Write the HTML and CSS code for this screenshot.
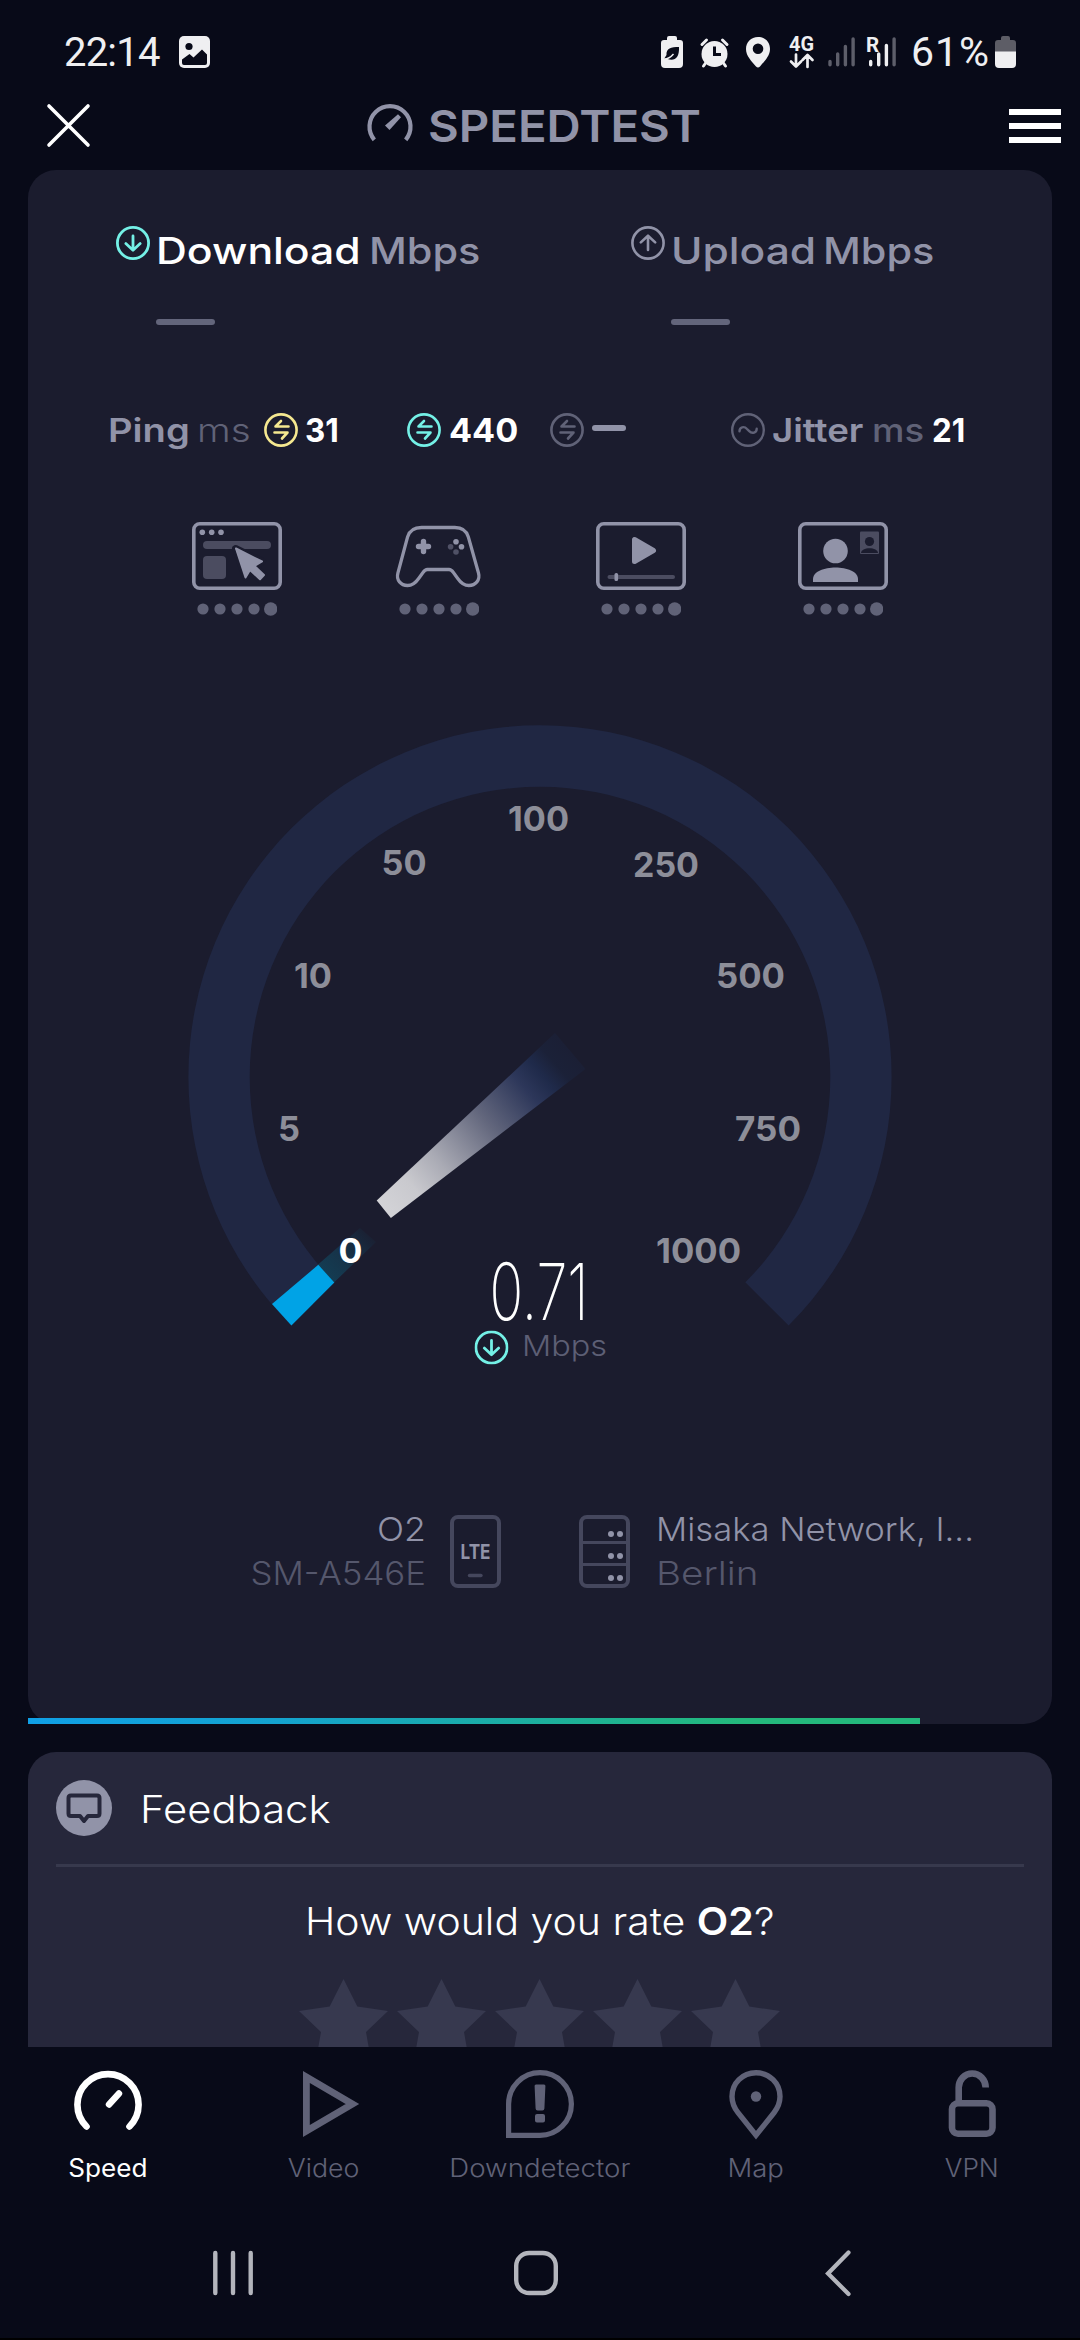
FILE: index.html
```html
<!DOCTYPE html>
<html lang="en">
<head>
<meta charset="utf-8">
<title>Speedtest</title>
<link rel="stylesheet" href="styles.css">
</head>
<body>
<svg class="defs" aria-hidden="true">
  <defs>
    <symbol id="i-down" viewBox="0 0 34 34"><g fill="none" stroke="currentColor" stroke-width="2.8" stroke-linecap="round" stroke-linejoin="round"><circle cx="17" cy="17" r="15.6"/><path d="M17 10v14M9.800 17.600 17 24.300l7.200-6.700"/></g></symbol>
    <symbol id="i-up" viewBox="0 0 34 34"><g fill="none" stroke="currentColor" stroke-width="2.600" stroke-linecap="round" stroke-linejoin="round"><circle cx="17" cy="17" r="15.600"/><path d="M17 24V10M9.800 16.400 17 9.700l7.200 6.700"/></g></symbol>
    <symbol id="i-swap" viewBox="0 0 34 34"><g fill="none" stroke="currentColor" stroke-width="2.600" stroke-linecap="round" stroke-linejoin="round"><circle cx="17" cy="17" r="15.600"/><path d="M24.500 13.500H11.500L17 8M10.500 19.500H23.500L18 25.500"/></g></symbol>
    <symbol id="i-wave" viewBox="0 0 34 34"><g fill="none" stroke="currentColor" stroke-width="2.400" stroke-linecap="round"><circle cx="17" cy="17" r="15.800"/><path d="M8.500 18.200c0-4 4.500-5.500 7.500-2.200l2.200 2.200c3 3 7.500 1.500 7.500-2.500"/></g></symbol>
    <symbol id="i-dots" viewBox="0 0 80 16"><g fill="#606277"><circle cx="6" cy="8" r="5.600"/><circle cx="23" cy="8" r="5.600"/><circle cx="40" cy="8" r="5.600"/><circle cx="57" cy="8" r="5.600"/><circle cx="73.700" cy="8" r="6.700"/></g></symbol>
    <symbol id="i-star" viewBox="0 0 90 90"><path fill="#37394f" d="M44.500 0 58.300 27.500 89 32 67 53l6 34-28.500-14L16 87l6-34L0 32l30.700-4.500z"/></symbol>
  </defs>
</svg>

<header class="status">
  <span class="clock">22:14</span>
  <svg class="photo" width="31" height="32" viewBox="0 0 31 32"><rect width="31" height="32" rx="5" fill="#efeff1"/><circle cx="10" cy="10.500" r="3.600" fill="#080a18"/><path d="M3 23.500 10.500 18l4 3.500L23 13.500l5 5V27q0 2-2 2H5q-2 0-2-2z" fill="#080a18"/></svg>
  <div class="indicators">
    <svg width="22" height="32" viewBox="0 0 22 32"><path fill="#efeff1" d="M6 4V2q0-2 2-2h6q2 0 2 2v2h3q3 0 3 3v21q0 4-4 4H4q-4 0-4-4V7q0-3 3-3z"/><path fill="#080a18" d="M18 11c-8 0-13 1.500-12.500 8L3 23h3.500c7 2.500 12-1 11.500-12z"/><path d="M3 23c4 0 7-2 9.500-5" stroke="#efeff1" stroke-width="1.400" fill="none"/></svg>
    <svg class="g17" width="29" height="31" viewBox="0 0 29 31"><g fill="none" stroke="#efeff1" stroke-width="3" stroke-linecap="round"><path d="M2 7.500 6.500 3M27 7.500 22.500 3M6 25.500 3.500 29M23 25.500 25.500 29"/></g><circle cx="14.500" cy="17" r="13" fill="#efeff1"/><path d="M14.500 9.500V17.500H21" fill="none" stroke="#080a18" stroke-width="3"/></svg>
    <svg class="g17" width="24" height="31" viewBox="0 0 24 31"><path fill="#efeff1" fill-rule="evenodd" d="M12 0C5 0 0 5 0 12c0 7 5.500 12 10 17.500q2 2 4 0C18.500 24 24 19 24 12 24 5 19 0 12 0zm0 6.500a5.300 5.300 0 1 1 0 10.600 5.300 5.300 0 0 1 0-10.600z"/></svg>
    <svg class="g19" width="26" height="34" viewBox="0 0 26 34"><text x="0" y="15.500" class="net" textLength="25" lengthAdjust="spacingAndGlyphs">4G</text><path d="M7 19.500V31M2 26.500l5 5 5-5M18.500 32V20.500M13.500 25l5-5 5 5" fill="none" stroke="#efeff1" stroke-width="2.700" stroke-linecap="round" stroke-linejoin="round"/></svg>
    <svg class="g13" width="27" height="30" viewBox="0 0 27 30"><g stroke="#5d5e6a" stroke-width="3.400" stroke-linecap="round"><path d="M2 24.500v3.300M9.700 17v10.800M17.400 9.500v18.300M25.100 2v25.800"/></g></svg>
    <svg class="g11" width="30" height="32" viewBox="0 0 30 32"><text x="0" y="15.500" class="net">R</text><g stroke="#efeff1" stroke-width="3.400" stroke-linecap="round"><path d="M4.700 25.500v3.300M12.700 18v10.800M20.400 9.500v19.300"/><path d="M28.100 3v25.800" stroke="#5d5e6a"/></g></svg>
    <span class="percent">61%</span>
    <svg width="21" height="32" viewBox="0 0 21 32"><path fill="#5d5d66" d="M6 4V2q0-2 2-2h5q2 0 2 2v2h3q3 0 3 3v9H0V7q0-3 3-3z"/><path fill="#efeff1" d="M0 15.500h21V28q0 4-4 4H4q-4 0-4-4z"/></svg>
  </div>
</header>

<nav class="topbar">
  <svg class="close" width="43" height="43" viewBox="0 0 43 43"><path d="M2 2 41 41M41 2 2 41" stroke="#fff" stroke-width="3.600" stroke-linecap="round"/></svg>
  <div class="brand">
    <svg width="46" height="42" viewBox="0 0 46 42"><path d="M7.300 37.800A20.500 20.500 0 1 1 38.700 37.800" fill="none" stroke="#9193a8" stroke-width="4.200"/><path fill="#9193a8" d="m18 23.500 13-11.200 3 3L22.500 28z"/></svg>
    <h1 class="t">SPEEDTEST</h1>
  </div>
  <div class="menu"><i></i><i></i><i></i></div>
</nav>

<main class="card test">
  <section class="speeds">
    <div>
      <div class="speed on"><svg width="34" height="34"><use href="#i-down"/></svg><b class="t dl">Download</b><span class="t">Mbps</span></div>
      <div class="dash"></div>
    </div>
    <div>
      <div class="speed"><svg width="34" height="34"><use href="#i-up"/></svg><b class="t ul">Upload</b><span class="t">Mbps</span></div>
      <div class="dash"></div>
    </div>
  </section>

  <section class="latency">
    <div class="ping-label"><b class="t ping">Ping</b><span class="t ms light">ms</span></div>
    <div class="lat idle"><svg width="34" height="34"><use href="#i-swap"/></svg><b class="t n2">31</b></div>
    <div class="lat down"><svg width="34" height="34"><use href="#i-swap"/></svg><b class="t n3">440</b></div>
    <div class="lat dim"><svg width="34" height="34"><use href="#i-swap"/></svg><i class="nodata"></i></div>
    <div class="lat dim"><svg width="34" height="34"><use href="#i-wave"/></svg><span class="t jitter">Jitter</span><span class="t ms">ms</span><b class="t n2">21</b></div>
  </section>

  <section class="quality">
    <div>
      <svg width="90" height="68" viewBox="0 0 90 68"><rect x="1.800" y="1.800" width="86.400" height="64.400" rx="6" fill="none" stroke="#9193a8" stroke-width="3.600"/><g fill="#9193a8"><circle cx="10.300" cy="10.300" r="2.800"/><circle cx="19.700" cy="10.300" r="2.800"/><circle cx="29" cy="10.300" r="2.800"/></g><g fill="#4b4c60"><rect x="11" y="19" width="68" height="8" rx="4"/><rect x="11" y="34" width="23" height="23" rx="4"/></g><path d="M43.500 26.500 70.500 39.500 62.500 44l9.500 9-4.500 4.500-9.500-9.500-4.500 7.500z" fill="#9193a8" stroke="#1b1c2e" stroke-width="7" paint-order="stroke" stroke-linejoin="round"/><path d="M44 26.500 70 39.500 62.500 44l9.500 9-4 4.200-10-9.200-4.500 7.500z" fill="#9193a8" stroke="#9193a8" stroke-width="2" stroke-linejoin="round"/></svg>
      <svg width="80" height="16"><use href="#i-dots"/></svg>
    </div>
    <div>
      <svg width="90" height="68" viewBox="0 0 90 68"><path d="M27 5.500H61.500C69 5.500 73.500 8.500 75.500 15L86 51C88 58 83 63.500 76 63.500 70 63.500 67 60 64.500 56.500L60 50.500C58.500 48.500 57.500 47.500 55.500 47.500H33C31 47.500 30 48.500 28.500 50.500L24 56.500C21.500 60 18.500 63.500 12.500 63.500 5.500 63.500 .500 58 2.500 51L12.500 15C14.500 8.500 19.500 5.500 27 5.500z" fill="none" stroke="#9193a8" stroke-width="3.400" transform="translate(1.500 0) scale(.965 1)"/><path d="M29.500 19.500v10M24.500 24.500h10" stroke="#9193a8" stroke-width="5.400" stroke-linecap="round"/><g fill="#9193a8"><circle cx="62" cy="19.700" r="2.800"/><circle cx="67.500" cy="24.700" r="2.800"/><g fill="#505166"><circle cx="56.600" cy="24.700" r="2.800"/><circle cx="62" cy="30" r="2.800"/></g></g></svg>
      <svg width="80" height="16"><use href="#i-dots"/></svg>
    </div>
    <div>
      <svg width="90" height="68" viewBox="0 0 90 68"><rect x="1.800" y="1.800" width="86.400" height="64.400" rx="6" fill="none" stroke="#9193a8" stroke-width="3.600"/><path d="M38.500 17.500v22L57.500 28.500z" fill="#9193a8" stroke="#9193a8" stroke-width="5" stroke-linejoin="round"/><path d="M13.500 55H77" stroke="#4b4c60" stroke-width="4" stroke-linecap="round"/><rect x="18.500" y="51" width="3.600" height="8" rx="1.600" fill="#9193a8"/></svg>
      <svg width="80" height="16"><use href="#i-dots"/></svg>
    </div>
    <div>
      <svg width="90" height="68" viewBox="0 0 90 68"><rect x="1.800" y="1.800" width="86.400" height="64.400" rx="6" fill="none" stroke="#9193a8" stroke-width="3.600"/><circle cx="37.500" cy="29" r="12.300" fill="#9193a8"/><path d="M15 60v-3C15 41.500 60 41.500 60 57v3z" fill="#9193a8"/><rect x="62" y="9.500" width="19" height="22.500" rx="1" fill="#4b4c60"/><circle cx="71.500" cy="19.500" r="4.600" fill="#1b1c2e"/><path d="M63 31c0-6.500 17-6.500 17 0z" fill="#1b1c2e"/></svg>
      <svg width="80" height="16"><use href="#i-dots"/></svg>
    </div>
  </section>

  <svg class="gauge" width="1024" height="680" viewBox="28 700 1024 680">
    <defs>
      <linearGradient id="needle" gradientUnits="userSpaceOnUse" x1="384" y1="1209" x2="570" y2="1051"><stop offset="0" stop-color="#d3d3d7"/><stop offset=".15" stop-color="#c9c9ce"/><stop offset=".3" stop-color="#a9aab4"/><stop offset=".55" stop-color="#63677d"/><stop offset=".76" stop-color="#2d375a"/><stop offset=".85" stop-color="#1f2a4a"/><stop offset=".92" stop-color="#1b2138"/><stop offset="1" stop-color="#1b1f35"/></linearGradient>
      <linearGradient id="glow" gradientUnits="userSpaceOnUse" x1="326" y1="1274" x2="374" y2="1230"><stop offset="0" stop-color="#143c52"/><stop offset=".5" stop-color="#173046"/><stop offset="1" stop-color="#1b1c2e"/></linearGradient>
    </defs>
    <path fill="#202743" d="M291.400 1325.600A351.600 351.600 0 1 1 788.600 1325.600L745.300 1282.300A290.300 290.300 0 1 0 334.700 1282.300z"/>
    <path fill="url(#glow)" d="M317.500 1265 360 1228 376 1242 334 1282.500z"/>
    <path fill="#00a3e6" d="M291.400 1325.600 272 1304 318.300 1264.800 334.300 1282.500z"/>
    <path fill="url(#needle)" d="M376.700 1200.400 390.900 1217.900 585.500 1069 555 1033z"/>
    <g class="ticks">
      <text x="508" y="831" textLength="61" lengthAdjust="spacingAndGlyphs">100</text>
      <text x="381.500" y="874.500" textLength="45" lengthAdjust="spacingAndGlyphs">50</text>
      <text x="633" y="876.500" textLength="66" lengthAdjust="spacingAndGlyphs">250</text>
      <text x="294" y="987.500" textLength="38" lengthAdjust="spacingAndGlyphs">10</text>
      <text x="716" y="987.500" textLength="69" lengthAdjust="spacingAndGlyphs">500</text>
      <text x="278" y="1140.500" textLength="22" lengthAdjust="spacingAndGlyphs">5</text>
      <text x="735" y="1140.500" textLength="66" lengthAdjust="spacingAndGlyphs">750</text>
      <text x="656" y="1262.500" textLength="85" lengthAdjust="spacingAndGlyphs">1000</text>
      <text class="lit" x="338.500" y="1262.500" textLength="24" lengthAdjust="spacingAndGlyphs">0</text>
    </g>
    <text class="value" x="489.500" y="1319.500" textLength="99" lengthAdjust="spacingAndGlyphs">0.71</text>
    <use href="#i-down" x="474.500" y="1330.500" width="34" height="34" color="#74f0e6"/>
    <text class="unit" x="522" y="1355.500" textLength="85" lengthAdjust="spacingAndGlyphs">Mbps</text>
  </svg>

  <section class="link">
    <div class="who right"><p class="t">O2</p><p class="t sub">SM-A546E</p></div>
    <svg width="51" height="73" viewBox="0 0 51 73"><rect x="2" y="2" width="47" height="69" rx="6" fill="none" stroke="#45475d" stroke-width="4"/><text class="lte" x="10.500" y="44" textLength="30" lengthAdjust="spacingAndGlyphs">LTE</text><path d="M19.500 60.500h11.500" stroke="#45475d" stroke-width="3.400" stroke-linecap="round"/></svg>
    <svg class="server" width="51" height="73" viewBox="0 0 51 73"><rect x="2" y="2" width="47" height="69" rx="6" fill="none" stroke="#45475d" stroke-width="4"/><path d="M2 27.500h47M2 49.500h47" stroke="#45475d" stroke-width="3"/><g fill="#9193a8"><circle cx="32" cy="19" r="3"/><circle cx="41" cy="19" r="3"/><circle cx="32" cy="41" r="3"/><circle cx="41" cy="41" r="3"/><circle cx="32" cy="63" r="3"/><circle cx="41" cy="63" r="3"/></g></svg>
    <div class="who"><p class="t host">Misaka Network, I...</p><p class="t sub city">Berlin</p></div>
  </section>

  <div class="progress"></div>
</main>

<section class="card feedback">
  <div class="fb-head">
    <svg width="56" height="56" viewBox="0 0 56 56"><circle cx="28" cy="28" r="28" fill="#9193a8"/><path d="M15 15.500h26q2.500 0 2.500 2.500v15.500q0 2.500-2.500 2.500H32l-4 5-4-5H15q-2.500 0-2.500-2.500V18q0-2.500 2.500-2.500z" fill="none" stroke="#26273b" stroke-width="4" stroke-linejoin="round"/></svg>
    <h2 class="t">Feedback</h2>
  </div>
  <p class="question"><span class="t">How would you rate <b>O2</b>?</span></p>
  <div class="stars"><svg width="90" height="90"><use href="#i-star"/></svg><svg width="90" height="90"><use href="#i-star"/></svg><svg width="90" height="90"><use href="#i-star"/></svg><svg width="90" height="90"><use href="#i-star"/></svg><svg width="90" height="90"><use href="#i-star"/></svg></div>
</section>

<nav class="tabs">
  <a class="on"><svg width="68" height="68" viewBox="0 0 68 68"><g fill="none" stroke="currentColor" stroke-linecap="round"><path d="M12.500 56.500A30.600 30.600 0 1 1 55.500 56.500" stroke-width="6.600"/><path d="m35 34.500 10-11" stroke-width="6.400"/></g></svg><span class="t speed-l">Speed</span></a>
  <a><svg width="68" height="68" viewBox="0 0 68 68"><path d="M16.400 7v54L62.500 34z" fill="none" stroke="currentColor" stroke-width="6.800"/></svg><span class="t video-l">Video</span></a>
  <a><svg width="68" height="68" viewBox="0 0 68 68"><path d="M2.600 65.400V34A31.400 31.400 0 1 1 34 65.400z" fill="none" stroke="currentColor" stroke-width="5.200"/><path fill="currentColor" d="M30 14.500h8q1.500 0 1.400 1.500l-1 22.500q-.100 2-2 2h-4.800q-1.900 0-2-2l-1-22.500q-.100-1.500 1.400-1.500zM31 44h6q2 0 2 2v4.500q0 2-2 2h-6q-2 0-2-2V46q0-2 2-2z"/></svg><span class="t down-l">Downdetector</span></a>
  <a><svg width="68" height="68" viewBox="0 0 68 68"><path d="M34 2.800C20.500 2.800 10 13.300 10 26.500c0 7 2.500 11.700 6 16.200L34 65.200 52 42.700c3.500-4.500 6-9.200 6-16.200C58 13.300 47.500 2.800 34 2.800z" fill="none" stroke="currentColor" stroke-width="5.400"/><circle cx="34" cy="26.500" r="5.200" fill="currentColor"/></svg><span class="t map-l">Map</span></a>
  <a><svg width="68" height="68" viewBox="0 0 68 68"><g fill="none" stroke="currentColor" stroke-width="6.600"><rect x="14" y="33.300" width="40.500" height="30.400" rx="6"/><path d="M20.700 31V17.500a13.500 14 0 0 1 27 0"/></g></svg><span class="t vpn-l">VPN</span></a>
</nav>

<footer class="sysnav">
  <svg width="40" height="46" viewBox="0 0 40 46"><path d="M2.300 3v40M20 3v40M37.700 3v40" stroke="#b3b5bc" stroke-width="4.400" stroke-linecap="round"/></svg>
  <svg class="home" width="44" height="46" viewBox="0 0 44 46"><rect x="2.200" y="3" width="39.600" height="40" rx="13" fill="none" stroke="#b3b5bc" stroke-width="4.400"/></svg>
  <svg width="26" height="48" viewBox="0 0 26 48"><path d="M23.500 3.500 3 24.500 23.500 45" fill="none" stroke="#b3b5bc" stroke-width="4.200" stroke-linecap="round"/></svg>
</footer>
</body>
</html>
```
FILE: styles.css
```css
* { box-sizing: border-box; }
body {
  margin: 0; width: 1080px; height: 2340px; overflow: hidden;
  background: #080a18; color: #9193a8;
  font-family: Inter, "Open Sans", sans-serif;
  display: flex; flex-direction: column;
}
h1, h2, p { margin: 0; font-weight: inherit; font-size: inherit; }
svg { display: block; flex: none; overflow: visible; }
.defs { position: absolute; width: 0; height: 0; }

/* wide lettering: --k stretches the glyphs horizontally */
.t { display: block; flex: none; white-space: nowrap; transform: scaleX(var(--k, 1)); transform-origin: left center; }

.status { height: 92px; padding: 12px 64px 0 64px; display: flex; align-items: center; color: #efeff1; font-family: Roboto, sans-serif; font-size: 40px; }
.clock { width: 115px; letter-spacing: -.8px; }
.indicators { margin-left: auto; display: flex; align-items: center; }
.g17 { margin-left: 17px; }
.g19 { margin-left: 19px; }
.g13 { margin-left: 13px; }
.g11 { margin-left: 11px; }
.net { font: 700 20.5px Roboto, sans-serif; fill: #efeff1; }
.percent { width: 84px; margin-left: 15px; font-size: 41px; letter-spacing: .9px; }

.topbar { height: 67px; margin-bottom: 11px; padding: 0 19px 0 47px; display: flex; align-items: center; justify-content: space-between; }
.brand { display: flex; align-items: center; gap: 15px; width: 332px; margin-left: -34px; }
.brand svg { margin-bottom: 6px; }
.brand h1 { font-size: 44px; font-weight: 560; --k: 1.075; }
.menu { width: 52px; height: 34px; display: flex; flex-direction: column; justify-content: space-between; }
.menu i { height: 6px; background: #fff; }

.card { margin: 0 28px; border-radius: 28px; flex: none; }
.test { height: 1554px; background: #1b1c2e; display: flex; flex-direction: column; }

.speeds { height: 155px; padding: 50px 0 0 88px; display: grid; grid-template-columns: 515px 1fr; }
.speed { height: 60px; display: flex; align-items: center; font-size: 37px; font-weight: 530; --k: 1.12; }
.speed svg { margin: 0 6px 14px 0; }
.speed b { font-weight: 530; }
.speed.on svg { color: #74f0e6; }
.speed.on b { color: #fff; }
.dl { width: 213px; --k: 1.155; }
.ul { width: 152px; --k: 1.15; }
.dash { width: 59px; height: 6px; border-radius: 3px; background: #63657b; margin: 39px 0 0 40px; }

.latency { height: 60px; margin-top: 75px; padding-left: 80px; display: grid; grid-template-columns: 156px 143px 143px 181px 1fr; align-items: center; font-size: 33px; }
.ping-label, .lat { display: flex; align-items: center; }
.ping { width: 89px; font-weight: 560; --k: 1.155; }
.ms { --k: 1.106; color: #606277; font-weight: 500; }
.light { --k: 1.17; font-weight: 300; }
.lat svg { margin-right: 7px; }
.lat b { color: #fff; font-weight: 680; }
.lat .n2 { --k: .95; }
.lat .n3 { --k: 1.035; margin-left: 1px; }
.idle svg { color: #f5e890; }
.down svg { color: #74f0e6; }
.dim svg { color: #606277; }
.nodata { width: 34px; height: 6px; border-radius: 3px; background: #9193a8; margin: 0 0 4px 1px; }
.jitter { width: 100px; font-weight: 560; --k: 1.11; }
.lat .ms { width: 60px; }

.quality { margin: 62px 0 0 164px; display: grid; grid-template-columns: repeat(4, 202px); }
.quality > div > svg + svg { margin: 11px 0 0 5px; }

.gauge { margin-top: 83px; }
.ticks { font-weight: 700; font-size: 34px; fill: #8d8e99; }
.ticks .lit { fill: #fff; }
.value { font-size: 79px; font-weight: 200; fill: #fff; }
.unit { font-size: 28px; font-weight: 300; fill: #5d5f75; }

.link { margin-top: 127px; height: 88px; display: grid; grid-template-columns: 422px 51px 78px 51px 1fr; align-items: center; font-size: 33px; line-height: 44px; font-weight: 360; }
.server { grid-column: 4; }
.who { padding-left: 26px; }
.who.right { padding: 0 24px 0 0; text-align: right; }
.who.right .t { transform-origin: right center; --k: 1.08; }
.who .sub { color: #55576c; font-weight: 300; }
.who.right .sub { --k: 1.055; }
.who .host { --k: 1.05; }
.who .city { --k: 1.17; }
.lte { font-size: 20.5px; font-weight: 700; fill: #9193a8; }
.progress { margin-top: auto; width: 892px; height: 6px; background: linear-gradient(90deg, #10a0e6, #14a3cf 28%, #1fb391 65%, #24b97c 80%); }

.feedback { margin-top: 28px; height: 295px; border-radius: 28px 28px 0 0; background: #26273b; color: #fff; overflow: hidden; padding: 0 28px; font-weight: 360; }
.fb-head { height: 115px; border-bottom: 3px solid #37394d; display: flex; align-items: center; }
.fb-head h2 { margin: 2px 0 0 28px; font-size: 38px; --k: 1.1; }
.question { height: 108px; display: flex; justify-content: center; align-items: center; font-size: 38px; }
.question .t { transform-origin: center; --k: 1.078; }
.question b { font-weight: 560; }
.stars { display: flex; gap: 8px; justify-content: center; }
.feedback .stars { margin-top: 4px; }

.tabs { height: 158px; flex: none; display: grid; grid-template-columns: repeat(5, 216px); padding-top: 23px; }
.tabs a { display: flex; flex-direction: column; align-items: center; color: #606277; font-size: 25px; line-height: 30px; font-weight: 300; }
.tabs .t { margin-top: 15px; transform-origin: center; }
.tabs .on { color: #fff; font-weight: 370; }
.speed-l { --k: 1.045; }
.video-l { --k: 1.07; }
.down-l { --k: 1.106; }
.map-l { --k: 1.1; }
.vpn-l { --k: 1.05; }

.sysnav { flex: 1; border-bottom: 2px solid #000; display: flex; align-items: center; padding: 2px 229px 0 213px; justify-content: space-between; }
.home { margin-left: -7px; }
```
